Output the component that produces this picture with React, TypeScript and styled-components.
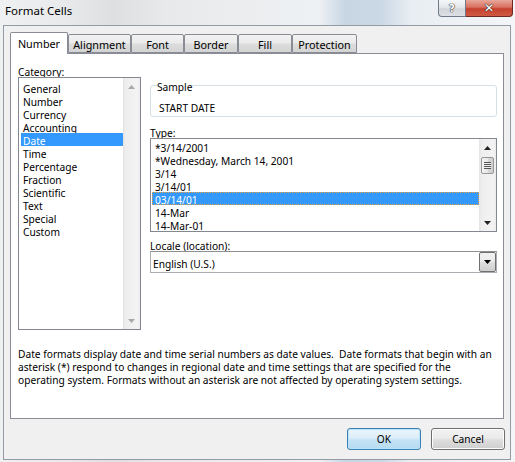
import React from 'react';
import styled, { createGlobalStyle, css } from 'styled-components';

const categories = [
  'General',
  'Number',
  'Currency',
  'Accounting',
  'Date',
  'Time',
  'Percentage',
  'Fraction',
  'Scientific',
  'Text',
  'Special',
  'Custom',
];

const types = [
  '*3/14/2001',
  '*Wednesday, March 14, 2001',
  '3/14',
  '3/14/01',
  '03/14/01',
  '14-Mar',
  '14-Mar-01',
];

const tabs = [
  { label: 'Number', width: 58 },
  { label: 'Alignment', width: 63 },
  { label: 'Font', width: 53 },
  { label: 'Border', width: 54 },
  { label: 'Fill', width: 54 },
  { label: 'Protection', width: 65 },
];

const UI_FONT = '"Noto Sans", "Open Sans", sans-serif';

const GlobalStyle = createGlobalStyle`
  html, body {
    margin: 0;
    padding: 0;
  }
  body {
    width: 515px;
    height: 462px;
    overflow: hidden;
    font-family: ${UI_FONT};
    font-size: 10.2px;
    color: #000;
  }
`;

// one text row, 13px tall, with the glyphs pushed down a little like Segoe UI sits
const textRow = css`
  height: 13px;
  line-height: 13px;
  box-sizing: border-box;
  padding-top: 2px;
  white-space: nowrap;
`;

const Window = styled.div`
  width: 515px;
  height: 462px;
  box-sizing: border-box;
  display: flex;
  flex-direction: column;
  padding: 0 4px 2px 3px;
  background: linear-gradient(
    90deg,
    #eef0f2 0%,
    #e9eaeb 12%,
    #dedfe0 22%,
    #e8e9ea 32%,
    #eceef0 50%,
    #eef1f4 62%,
    #c8d6e4 67%,
    #cbd8e5 74%,
    #e9eef3 80%,
    #f3f5f7 100%
  );
`;

const TitleBar = styled.div`
  height: 25px;
  display: flex;
  align-items: flex-start;
  flex: none;
`;

const Title = styled.div`
  margin: 3px 0 0 2px;
  font-size: 11.5px;
  line-height: 16px;
  flex: 1;
`;

const CaptionButton = styled.div<{ $close?: boolean }>`
  height: 17px;
  box-sizing: border-box;
  display: flex;
  align-items: center;
  justify-content: center;
  border: 1px solid ${(p) => (p.$close ? '#6d2a22' : '#707a86')};
  border-top: none;
  width: ${(p) => (p.$close ? '47px' : '28px')};
  margin-right: ${(p) => (p.$close ? '-2px' : '0')};
  border-radius: ${(p) => (p.$close ? '0 0 4px 0' : '0 0 0 4px')};
  border-left: ${(p) => (p.$close ? 'none' : '1px solid #707a86')};
  background: ${(p) =>
    p.$close
      ? 'linear-gradient(#e8a89c 0%, #d8705f 45%, #c5412d 55%, #cf5a44 100%)'
      : 'linear-gradient(#f6f7f8 0%, #e4e7ea 45%, #d2d6db 55%, #dde1e5 100%)'};
  color: #fff;
  font-family: "DejaVu Sans", sans-serif;
  font-weight: bold;
  font-size: ${(p) => (p.$close ? '12px' : '11px')};
  text-shadow: 0 0 1px #333, 0 0 1px #333, 0 0 1px #333;
`;

const Client = styled.div`
  flex: 1;
  display: flex;
  flex-direction: column;
  background: #f0f0f0;
  border: 1px solid #939ba4;
  padding: 7px 6px 0 6px;
`;

const TabStrip = styled.div`
  display: flex;
  align-items: flex-end;
  height: 21px;
  margin-bottom: -1px;
`;

const Tab = styled.div<{ $active?: boolean; $width: number }>`
  position: relative;
  z-index: ${(p) => (p.$active ? 2 : 1)};
  box-sizing: border-box;
  width: ${(p) => p.$width}px;
  height: ${(p) => (p.$active ? 22 : 19)}px;
  margin-bottom: ${(p) => (p.$active ? 0 : 1)}px;
  border: 1px solid #898c95;
  border-bottom: ${(p) => (p.$active ? 'none' : '1px solid #898c95')};
  border-radius: 2px 2px 0 0;
  background: ${(p) =>
    p.$active ? '#fff' : 'linear-gradient(#f2f2f2 0%, #ebebeb 45%, #dcdcdc 55%, #d4d4d4 100%)'};
  display: flex;
  justify-content: center;
  padding-top: ${(p) => (p.$active ? 4 : 3)}px;
  line-height: 14px;
  font-size: 10.8px;
`;

const Panel = styled.div`
  height: 366px;
  box-sizing: border-box;
  border: 1px solid #898c95;
  background: #fff;
  padding: 10px 6px 0 7px;
  display: flex;
  flex-direction: column;
`;

const Columns = styled.div`
  display: grid;
  grid-template-columns: 123px 347px;
  column-gap: 9px;
`;

const Column = styled.div`
  display: flex;
  flex-direction: column;
`;

const FieldLabel = styled.div<{ $gap?: number }>`
  ${textRow};
  margin-top: ${(p) => p.$gap ?? 0}px;
  u {
    text-decoration: underline;
    text-underline-offset: 1px;
  }
`;

const ListBox = styled.div<{ $height: number }>`
  height: ${(p) => p.$height}px;
  box-sizing: border-box;
  border: 1px solid #828790;
  display: flex;
  background: #fff;
`;

const ListItems = styled.div<{ $padTop: number; $padLeft: number }>`
  flex: 1;
  padding: ${(p) => p.$padTop}px 0 0 ${(p) => p.$padLeft}px;
  display: flex;
  flex-direction: column;
`;

const ListItem = styled.div<{ $selected?: boolean; $focused?: boolean; $indent: number }>`
  ${textRow};
  padding-left: ${(p) => p.$indent}px;
  background: ${(p) => (p.$selected ? '#3399ff' : 'transparent')};
  color: ${(p) => (p.$selected ? '#fff' : '#000')};
  outline: ${(p) => (p.$focused ? '1px dotted #e8a040' : 'none')};
  outline-offset: -1px;
`;

const ScrollBar = styled.div`
  width: 17px;
  flex: none;
  display: flex;
  flex-direction: column;
  align-items: center;
  background: linear-gradient(90deg, #e3e3e3 0%, #eeeeee 15%, #f3f3f3 85%, #ebebeb 100%);
`;

const ArrowButton = styled.div`
  height: 17px;
  width: 17px;
  flex: none;
  display: flex;
  align-items: center;
  justify-content: center;
`;

const Thumb = styled.div`
  margin-top: 1px;
  width: 13px;
  height: 17px;
  box-sizing: border-box;
  border: 1px solid #979797;
  border-radius: 2px;
  background: linear-gradient(90deg, #f4f4f4 0%, #e8e8e8 50%, #d8d8d8 55%, #cfcfcf 100%);
  display: flex;
  align-items: center;
  justify-content: center;
`;

const Grip = styled.div`
  width: 7px;
  height: 7px;
  background: repeating-linear-gradient(#555 0 1px, #eee 1px 2px);
`;

const Spacer = styled.div`
  flex: 1;
`;

const GroupBox = styled.fieldset`
  margin: 15px 0 0 0;
  padding: 0 0 3px 6px;
  border: 1px solid #d5dfe5;
  border-radius: 3px;
  min-width: 0;
`;

const Legend = styled.legend`
  ${textRow};
  padding: 2px 0 0 0;
`;

const SampleText = styled.div`
  ${textRow};
  margin: 8px 0 0 2px;
`;

const Combo = styled.div`
  height: 22px;
  box-sizing: border-box;
  border: 1px solid #abadb3;
  border-top-color: #8e8f8f;
  display: flex;
  align-items: center;
  background: #fff;
`;

const ComboText = styled.div`
  ${textRow};
  flex: 1;
  padding-left: 2px;
`;

const ComboButton = styled.div`
  width: 17px;
  height: 20px;
  box-sizing: border-box;
  border: 1px solid #707070;
  border-radius: 2px;
  background: linear-gradient(#f2f2f2 0%, #ebebeb 45%, #dddddd 55%, #cfcfcf 100%);
  display: flex;
  align-items: center;
  justify-content: center;
`;

const Description = styled.p`
  margin: 17px 0 0 0;
  padding-top: 1px;
  line-height: 13px;
  white-space: nowrap;
`;

const ButtonRow = styled.div`
  display: flex;
  justify-content: flex-end;
  gap: 10px;
  margin: 9px -1px 0 0;
`;

const DialogButton = styled.div<{ $default?: boolean }>`
  width: 74px;
  height: 22px;
  box-sizing: border-box;
  border: 1px solid ${(p) => (p.$default ? '#3c7fb1' : '#707070')};
  border-radius: 3px;
  background: ${(p) =>
    p.$default
      ? 'linear-gradient(#eaf5fc 0%, #dcedf8 45%, #c4e3f6 55%, #b6dbf2 100%)'
      : 'linear-gradient(#f2f2f2 0%, #ebebeb 45%, #dddddd 55%, #cfcfcf 100%)'};
  box-shadow: inset 0 0 0 1px ${(p) => (p.$default ? '#b8e3fa' : '#fcfcfc')};
  display: flex;
  align-items: center;
  justify-content: center;
  padding-top: 1px;
  line-height: 13px;
`;

const Triangle = ({ dir, color }: { dir: 'up' | 'down'; color: string }) => (
  <svg width="7" height="4" viewBox="0 0 7 4">
    <polygon points={dir === 'up' ? '3.5,0 7,4 0,4' : '0,0 7,0 3.5,4'} fill={color} />
  </svg>
);

const App = () => {
  return (
    <>
      <GlobalStyle />
      <Window>
        <TitleBar>
          <Title>Format Cells</Title>
          <CaptionButton>?</CaptionButton>
          <CaptionButton $close>✕</CaptionButton>
        </TitleBar>
        <Client>
          <TabStrip>
            {tabs.map((t, i) => (
              <Tab key={t.label} $active={i === 0} $width={t.width}>
                {t.label}
              </Tab>
            ))}
          </TabStrip>
          <Panel>
            <Columns>
              <Column>
                <FieldLabel>
                  <u>C</u>ategory:
                </FieldLabel>
                <ListBox $height={253}>
                  <ListItems $padTop={3} $padLeft={2}>
                    {categories.map((c) => (
                      <ListItem key={c} $indent={2} $selected={c === 'Date'}>
                        {c}
                      </ListItem>
                    ))}
                  </ListItems>
                  <ScrollBar>
                    <ArrowButton>
                      <Triangle dir="up" color="#a8a8a8" />
                    </ArrowButton>
                    <Spacer />
                    <ArrowButton>
                      <Triangle dir="down" color="#a8a8a8" />
                    </ArrowButton>
                  </ScrollBar>
                </ListBox>
              </Column>
              <Column>
                <GroupBox>
                  <Legend>Sample</Legend>
                  <SampleText>START DATE</SampleText>
                </GroupBox>
                <FieldLabel $gap={8}>
                  <u>T</u>ype:
                </FieldLabel>
                <ListBox $height={94}>
                  <ListItems $padTop={1} $padLeft={1}>
                    {types.map((t, i) => (
                      <ListItem key={t} $indent={3} $selected={i === 4} $focused={i === 4}>
                        {t}
                      </ListItem>
                    ))}
                  </ListItems>
                  <ScrollBar>
                    <ArrowButton>
                      <Triangle dir="up" color="#222" />
                    </ArrowButton>
                    <Thumb>
                      <Grip />
                    </Thumb>
                    <Spacer />
                    <ArrowButton>
                      <Triangle dir="down" color="#222" />
                    </ArrowButton>
                  </ScrollBar>
                </ListBox>
                <FieldLabel $gap={6}>
                  <u>L</u>ocale (location):
                </FieldLabel>
                <Combo>
                  <ComboText>English (U.S.)</ComboText>
                  <ComboButton>
                    <Triangle dir="down" color="#000" />
                  </ComboButton>
                </Combo>
              </Column>
            </Columns>
            <Description>
              Date formats display date and time serial numbers as date values.&nbsp; Date formats that begin with an
              <br />
              asterisk (*) respond to changes in regional date and time settings that are specified for the
              <br />
              operating system. Formats without an asterisk are not affected by operating system settings.
            </Description>
          </Panel>
          <ButtonRow>
            <DialogButton $default>OK</DialogButton>
            <DialogButton>Cancel</DialogButton>
          </ButtonRow>
        </Client>
      </Window>
    </>
  );
};

export default App;
